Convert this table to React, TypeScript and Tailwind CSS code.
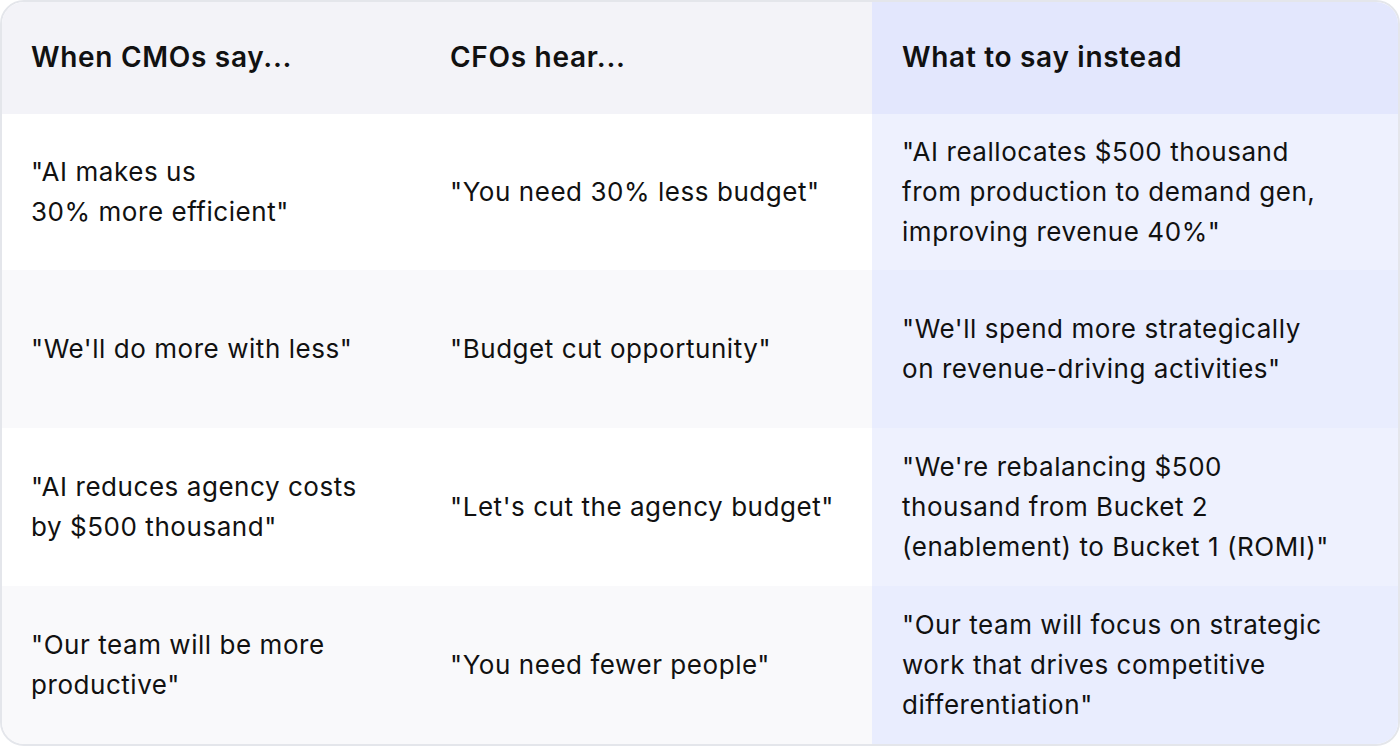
import React from 'react';

const rows: { say: string[]; hear: string; instead: string[]; h: string }[] = [
  {
    say: ['"AI makes us', '30% more efficient"'],
    hear: '"You need 30% less budget"',
    instead: ['"AI reallocates $500 thousand', 'from production to demand gen,', 'improving revenue 40%"'],
    h: 'h-[156px]',
  },
  {
    say: ['"We\'ll do more with less"'],
    hear: '"Budget cut opportunity"',
    instead: ['"We\'ll spend more strategically', 'on revenue-driving activities"'],
    h: 'h-[158px]',
  },
  {
    say: ['"AI reduces agency costs', 'by $500 thousand"'],
    hear: '"Let\'s cut the agency budget"',
    instead: ['"We\'re rebalancing $500', 'thousand from Bucket 2', '(enablement) to Bucket 1 (ROMI)"'],
    h: 'h-[158px]',
  },
  {
    say: ['"Our team will be more', 'productive"'],
    hear: '"You need fewer people"',
    instead: ['"Our team will focus on strategic', 'work that drives competitive', 'differentiation"'],
    h: 'h-[158px]',
  },
];

const Lines = ({ lines }: { lines: string[] }) => (
  <div>
    {lines.map((l, i) => (
      <div key={i}>{l}</div>
    ))}
  </div>
);

export default function App() {
  return (
    <div className="w-[1400px] h-[746px] bg-white font-['Inter',sans-serif] text-[#111111]">
      <div className="h-full rounded-[24px] border-2 border-[#e4e6eb] overflow-hidden">
        {/* Header */}
        <div className="grid grid-cols-[419px_451px_1fr] h-[112px] text-[28px] font-semibold tracking-[0.7px]">
          <div className="bg-[#f3f3f8] flex items-center pl-[29px] pb-[2px]">When CMOs say...</div>
          <div className="bg-[#f3f3f8] flex items-center pl-[29px] pb-[2px]">CFOs hear...</div>
          <div className="bg-[#e3e7fd] flex items-center pl-[30px] pb-[2px]">What to say instead</div>
        </div>

        {/* Body */}
        {rows.map((r, i) => {
          const even = i % 2 === 1;
          return (
            <div
              key={i}
              className={`grid grid-cols-[419px_451px_1fr] ${r.h} text-[26px] leading-[40px] tracking-[0.55px]`}
            >
              <div className={`${even ? 'bg-[#f9f9fb]' : 'bg-white'} flex items-center pl-[29px]`}>
                <Lines lines={r.say} />
              </div>
              <div className={`${even ? 'bg-[#f9f9fb]' : 'bg-white'} flex items-center pl-[29px]`}>
                {r.hear}
              </div>
              <div className={`${even ? 'bg-[#e9edfe]' : 'bg-[#eef1fe]'} flex items-center pl-[30px]`}>
                <Lines lines={r.instead} />
              </div>
            </div>
          );
        })}
      </div>
    </div>
  );
}
